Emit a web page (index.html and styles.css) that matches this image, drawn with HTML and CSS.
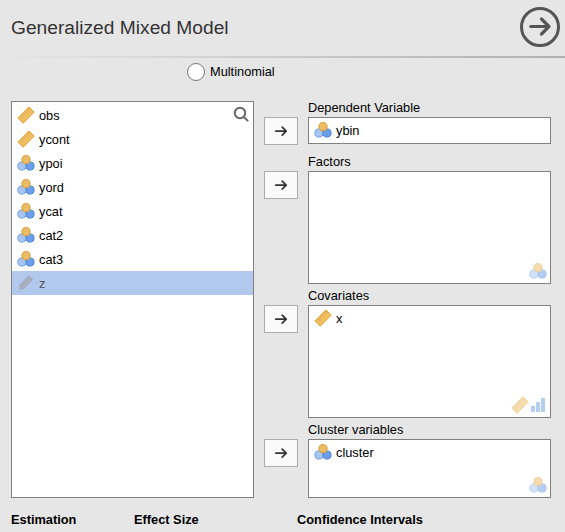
FILE: index.html
```
<!DOCTYPE html>
<html lang="en">
<head>
<meta charset="utf-8">
<title>Generalized Mixed Model</title>
<link rel="stylesheet" href="styles.css">
</head>
<body>
<svg class="sprite" aria-hidden="true">
  <symbol id="ruler" viewBox="0 0 18 18">
    <path d="M11.8 .9 17.2 6.1 6.2 17.2 .9 12Z" fill="#f0bd60" stroke="#e2a436"/>
    <path d="M3.6 9.4l2 2M5.6 7.4l1.4 1.4M7.6 5.4l2 2M9.6 3.4l1.4 1.4M11.4 1.6l2 2" stroke="#d79b35" stroke-width=".9" fill="none"/>
  </symbol>
  <symbol id="nominal" viewBox="0 0 18 18">
    <circle cx="5" cy="12" r="4.1" fill="#a9c6f3" stroke="#6c9fe8"/>
    <circle cx="13" cy="12" r="4.1" fill="#6b9de8" stroke="#4d86df"/>
    <circle cx="9" cy="5.7" r="4.1" fill="#edbb62" stroke="#d39c3c"/>
  </symbol>
  <symbol id="used" viewBox="0 0 18 18">
    <path d="M12 1.2 16.3 5.6 6.6 15.6H2v-4.4Z" fill="#a5adbf"/>
  </symbol>
  <symbol id="ordinal" viewBox="0 0 18 18">
    <path d="M2 10h4v6H2zM7 6h4v10H7zM12 2h4v14h-4z" fill="#6b9de8"/>
  </symbol>
  <symbol id="arrow" viewBox="0 0 14 14">
    <path d="M1.8 7.2h10.4M8.2 3.2l4 4-4 4" fill="none" stroke="#333" stroke-width="1.7" stroke-linecap="round" stroke-linejoin="round"/>
  </symbol>
</svg>
<header class="header">
  <h1 class="title">Generalized Mixed Model</h1>
  <svg class="go" viewBox="0 0 40 40"><circle cx="20" cy="20" r="18.5" fill="none" stroke="#555" stroke-width="3"/><path d="M10.8 19.5H29M21.5 12l7.5 7.5-7.5 7.5" fill="none" stroke="#555" stroke-width="3.2" stroke-linecap="round" stroke-linejoin="round"/></svg>
</header>
<div class="rule"></div>
<label class="option"><span class="radio"></span><span class="caption">Multinomial</span></label>
<main class="supplier">
  <div class="box variables">
    <div class="row"><svg class="icon"><use href="#ruler"/></svg>obs</div>
    <div class="row"><svg class="icon"><use href="#ruler"/></svg>ycont</div>
    <div class="row"><svg class="icon"><use href="#nominal"/></svg>ypoi</div>
    <div class="row"><svg class="icon"><use href="#nominal"/></svg>yord</div>
    <div class="row"><svg class="icon"><use href="#nominal"/></svg>ycat</div>
    <div class="row"><svg class="icon"><use href="#nominal"/></svg>cat2</div>
    <div class="row"><svg class="icon"><use href="#nominal"/></svg>cat3</div>
    <div class="row selected"><svg class="icon"><use href="#used"/></svg>z</div>
    <svg class="search" viewBox="0 0 16 16"><circle cx="7" cy="7" r="5.2" fill="none" stroke="#666" stroke-width="2"/><path d="M10.7 10.7l4.4 4.4" stroke="#666" stroke-width="2"/></svg>
  </div>
  <div class="targets">
    <section class="target">
      <h2 class="label">Dependent Variable</h2>
      <button class="move"><svg><use href="#arrow"/></svg></button>
      <div class="box single"><div class="row"><svg class="icon"><use href="#nominal"/></svg>ybin</div></div>
    </section>
    <section class="target">
      <h2 class="label">Factors</h2>
      <button class="move"><svg><use href="#arrow"/></svg></button>
      <div class="box tall"><div class="permitted"><svg class="icon"><use href="#nominal"/></svg></div></div>
    </section>
    <section class="target">
      <h2 class="label">Covariates</h2>
      <button class="move"><svg><use href="#arrow"/></svg></button>
      <div class="box tall"><div class="row"><svg class="icon"><use href="#ruler"/></svg>x</div><div class="permitted"><svg class="icon"><use href="#ruler"/></svg><svg class="icon"><use href="#ordinal"/></svg></div></div>
    </section>
    <section class="target">
      <h2 class="label">Cluster variables</h2>
      <button class="move"><svg><use href="#arrow"/></svg></button>
      <div class="box short"><div class="row"><svg class="icon"><use href="#nominal"/></svg>cluster</div><div class="permitted"><svg class="icon"><use href="#nominal"/></svg></div></div>
    </section>
  </div>
</main>
<footer class="headings"><h3>Estimation</h3><h3>Effect Size</h3><h3>Confidence Intervals</h3></footer>
</body>
</html>
```
FILE: styles.css
```
* { box-sizing: border-box; }
body {
  margin: 0;
  height: 532px;
  overflow: hidden;
  background: #e6e6e6;
  color: #000;
  font: 12.8px/15px "Liberation Sans", Arial, sans-serif;
}
h1, h2, h3 { margin: 0; font-size: inherit; }
svg { display: block; }
.sprite { position: absolute; width: 0; height: 0; }
.header {
  display: flex;
  justify-content: space-between;
  height: 56px;
  padding: 7px 5px 0 11px;
}
.title {
  font-size: 19.2px;
  font-weight: normal;
  line-height: 42px;
  color: #333;
}
.go { width: 40px; height: 40px; }
.rule { height: 2px; background: linear-gradient(to right, #e6e6e6, #b0b0b0); }
.option {
  display: flex;
  align-items: center;
  gap: 5px;
  height: 18px;
  margin: 5px 0 0 187px;
}
.caption { padding-bottom: 2px; }
.radio {
  width: 18px;
  height: 18px;
  border: 1px solid #777;
  border-radius: 50%;
  background: #fff;
}
.supplier { display: flex; gap: 10px; padding: 20px 0 0 11px; }
.box {
  position: relative;
  width: 243px;
  border: 1px solid #808080;
  background: #fff;
}
.variables { height: 397px; padding-top: 1px; }
.row {
  display: flex;
  align-items: center;
  gap: 4px;
  height: 24px;
  padding-left: 5px;
}
.icon { width: 18px; height: 18px; }
.selected { background: #b3c8ed; color: #555; }
.search { position: absolute; top: 4px; right: 4px; width: 16px; height: 16px; }
.targets { display: flex; flex-direction: column; gap: 5px; margin-top: -1px; }
.target {
  display: grid;
  grid-template-columns: 34px 243px;
  grid-template-rows: 17px auto;
  column-gap: 10px;
  align-items: start;
}
.label { grid-column: 2; font-weight: normal; }
.move {
  display: flex;
  align-items: center;
  justify-content: center;
  height: 28px;
  margin-bottom: -1px;
  padding: 0;
  border: 1px solid #acacac;
  background: #fafafa;
}
.move svg { width: 14px; height: 14px; }
.single { height: 27px; margin-bottom: 5px; }
.tall { height: 113px; }
.short { height: 59px; }
.target + .target { margin-top: -1px; }
.target:nth-child(2) { margin-top: 0; }
.permitted {
  position: absolute;
  right: 3px;
  bottom: 3px;
  display: flex;
  opacity: .5;
}
.headings {
  display: grid;
  grid-template-columns: 123px 163px auto;
  padding: 14px 0 0 11px;
}
```
